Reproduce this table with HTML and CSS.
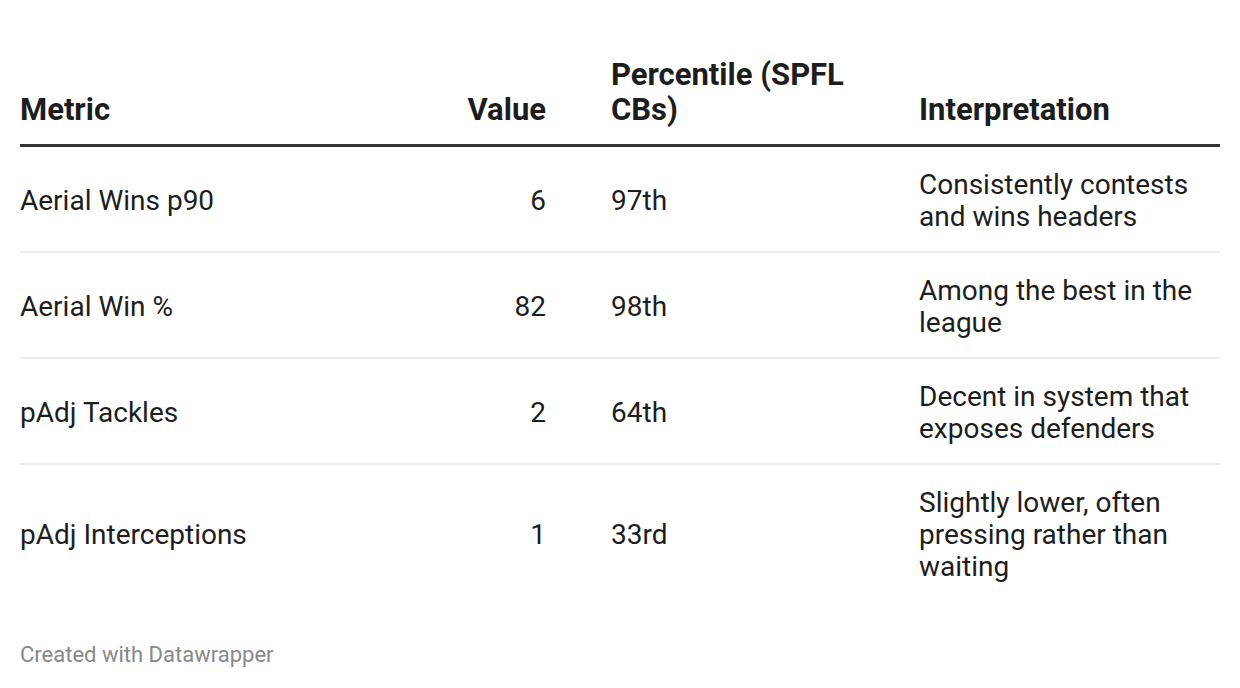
FILE: index.html
```html
<!DOCTYPE html>
<html lang="en">
<head>
<meta charset="utf-8">
<title>Datawrapper table</title>
<link rel="stylesheet" href="styles.css">
</head>
<body>
<div class="chart">
  <div class="table">
    <div class="row head">
      <div class="cell metric">Metric</div>
      <div class="cell value">Value</div>
      <div class="cell pct">Percentile (SPFL CBs)</div>
      <div class="cell interp">Interpretation</div>
    </div>
    <div class="row">
      <div class="cell metric">Aerial Wins p90</div>
      <div class="cell value">6</div>
      <div class="cell pct">97th</div>
      <div class="cell interp">Consistently contests and wins headers</div>
    </div>
    <div class="row">
      <div class="cell metric">Aerial Win %</div>
      <div class="cell value">82</div>
      <div class="cell pct">98th</div>
      <div class="cell interp">Among the best in the league</div>
    </div>
    <div class="row">
      <div class="cell metric">pAdj Tackles</div>
      <div class="cell value">2</div>
      <div class="cell pct">64th</div>
      <div class="cell interp">Decent in system that exposes defenders</div>
    </div>
    <div class="row last">
      <div class="cell metric">pAdj Interceptions</div>
      <div class="cell value">1</div>
      <div class="cell pct">33rd</div>
      <div class="cell interp">Slightly lower, often pressing rather than waiting</div>
    </div>
  </div>
  <div class="footer">Created with Datawrapper</div>
</div>
</body>
</html>
```

FILE: styles.css
```css
* {
  box-sizing: border-box;
}

html, body {
  margin: 0;
  padding: 0;
  background: #ffffff;
}

body {
  font-family: Roboto, "Liberation Sans", Arial, sans-serif;
  color: #1d1d1d;
}

.chart {
  padding: 57px 20px 0 20px;
  width: 1240px;
}

.table {
  width: 1200px;
}

.row {
  display: grid;
  grid-template-columns: 426px 100px 373px 301px;
  border-bottom: 2px solid #ededed;
  font-size: 28px;
  line-height: 32px;
}

.row.head {
  border-bottom: 3px solid #333333;
  font-size: 31px;
  font-weight: 700;
  line-height: 35px;
}

.row.last {
  border-bottom: none;
}

.cell {
  padding: 22px 0 18px 0;
  align-self: center;
}

.head .cell {
  padding: 0 0 17px 0;
  align-self: end;
}

.value {
  text-align: right;
}

.pct {
  padding-left: 65px !important;
  padding-right: 30px !important;
}

.footer {
  margin-top: 41px;
  font-size: 22px;
  line-height: 26px;
  color: #888888;
}
```
